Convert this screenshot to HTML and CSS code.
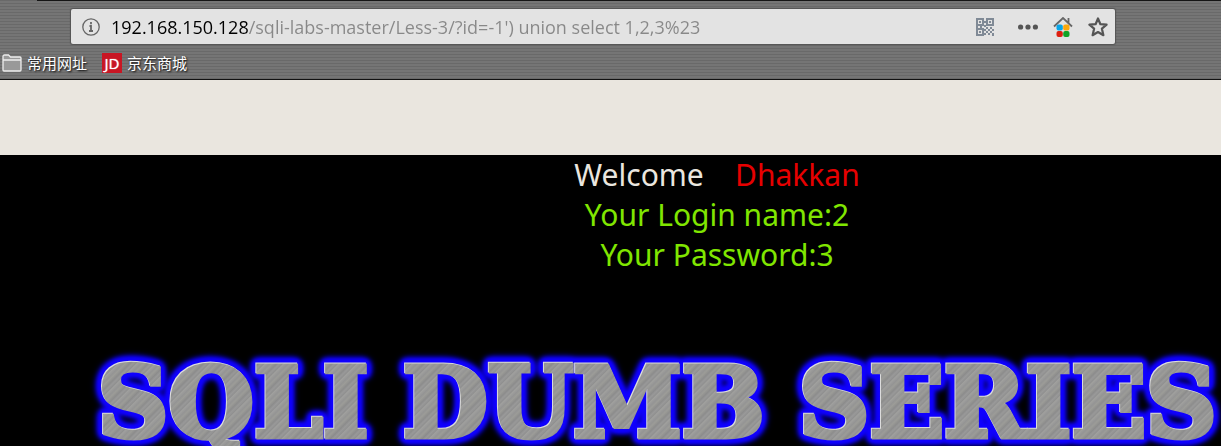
FILE: index.html
```html
<!DOCTYPE html>
<html lang="en">
<head>
    <meta charset="UTF-8">
    <meta name="viewport" content="width=device-width, initial-scale=1.0">
    <title>Less-3 Error Based - String</title>
    <link rel="stylesheet" href="styles.css">
</head>
<body>
    <header class="toolbar">
        <div class="address-bar">
            <svg class="info-icon" viewBox="0 0 18 18">
                <circle cx="9" cy="9" r="8.200" fill="none" stroke="#666" stroke-width="1.300"/>
                <path d="M9 4v2.200M7.500 8H9v5M7 13h4" fill="none" stroke="#666" stroke-width="1.800"/>
            </svg>
            <input type="text" class="address" aria-label="Address" value="192.168.150.128/sqli-labs-master/Less-3/?id=-1') union select 1,2,3%23">
            <div class="actions">
                <button class="action" aria-label="QR code">
                    <svg width="18" height="18" viewBox="0 0 18 18">
                        <g fill="none" stroke="#808a96" stroke-width="2">
                            <rect x="1" y="1" width="6" height="6"/>
                            <rect x="11" y="1" width="6" height="6"/>
                            <rect x="1" y="11" width="6" height="6"/>
                        </g>
                        <path fill="#808a96" d="M3 3h2v2H3zM13 3h2v2h-2zM3 13h2v2H3zM8 3h2v2H8zM8 7h2v2H8zM0 8h2v2H0zM4 8h2v2H4zM10 9h2v2h-2zM14 9h2v2h-2zM8 11h2v2H8zM12 11h2v2h-2zM16 11h2v2h-2zM10 13h2v2h-2zM14 13h2v2h-2zM8 15h2v2H8zM12 15h2v2h-2zM16 15h2v3h-2z"/>
                    </svg>
                </button>
                <button class="action menu" aria-label="Page actions">
                    <svg width="20" height="6" viewBox="0 0 20 6" fill="#555">
                        <circle cx="2.600" cy="3" r="2.600"/>
                        <circle cx="10" cy="3" r="2.600"/>
                        <circle cx="17.400" cy="3" r="2.600"/>
                    </svg>
                </button>
                <button class="action" aria-label="Home">
                    <svg width="20" height="20" viewBox="0 0 20 20">
                        <path d="M1 9.500L10 1l9 8.500M15.500 1v5" fill="none" stroke="#666" stroke-width="1.800"/>
                        <rect x="3.500" y="7.500" width="6.300" height="6" rx="2" fill="#08a5e8"/>
                        <rect x="10.200" y="7.500" width="6.300" height="6" rx="2" fill="#fba80c"/>
                        <rect x="3.500" y="14" width="6.300" height="6" rx="2" fill="#dd2010"/>
                        <rect x="10.200" y="14" width="6.300" height="6" rx="2" fill="#12a326"/>
                    </svg>
                </button>
                <button class="action" aria-label="Bookmark this page">
                    <svg width="20" height="20" viewBox="0 0 20 20">
                        <path d="M10 1.500l2.400 5.700 6.200.5-4.700 4 1.500 6.500L10 15l-5.400 3.200 1.500-6.500-4.700-4 6.200-.5z" fill="none" stroke="#555" stroke-width="2.200" stroke-linejoin="round"/>
                    </svg>
                </button>
            </div>
        </div>
        <nav class="bookmarks">
            <a class="bookmark" href="#">
                <svg width="20" height="18" viewBox="0 0 20 18">
                    <path d="M1 16V2.500Q1 1 2.500 1h4L8.500 3H18q1 0 1 1v12q0 1-1 1H2q-1 0-1-1zM1 6h18" fill="#999" stroke="#eee" stroke-width="1.300"/>
                </svg>
                <span>常用网址</span>
            </a>
            <a class="bookmark" href="#">
                <span class="jd">JD</span>
                <span>京东商城</span>
            </a>
        </nav>
    </header>
    <main class="page">
        <div class="welcome">
            <div>Welcome&nbsp;&nbsp;&nbsp;&nbsp;<span class="name">Dhakkan</span></div>
            <div class="result">Your Login name:2</div>
            <div class="result">Your Password:3</div>
        </div>
        <div class="banner"><h1 class="title">SQLI DUMB SERIES</h1></div>
    </main>
</body>
</html>
```
FILE: styles.css
```css
body {
    display: flex;
    flex-direction: column;
    margin: 0;
    height: 100vh;
    overflow: hidden;
    background-color: #eae6df;
    font-family: "Open Sans", "Noto Sans CJK SC", sans-serif;
}

.toolbar {
    flex: none;
    box-sizing: border-box;
    height: 80px;
    padding-top: 9px;
    border-bottom: 1px solid #111;
    background:
        linear-gradient(#151515, #151515) 37px 0 / 100% 1px no-repeat,
        repeating-linear-gradient(#696969 0, #696969 1px, #757575 1px, #757575 3px);
}

.address-bar {
    display: flex;
    align-items: center;
    box-sizing: border-box;
    height: 35px;
    margin: 0 106px 0 71px;
    padding: 0 7px 0 11px;
    border-radius: 2px;
    background-color: #e3e3e3;
    box-shadow: 0 0 1px 1px #555;
}

.info-icon {
    width: 18px;
    height: 18px;
}

.address {
    flex: 1;
    min-width: 0;
    margin-left: 11px;
    padding: 0;
    border: 0;
    outline: 0;
    font: 18px "Open Sans", sans-serif;
    color: transparent;
    background: linear-gradient(to right, #000 138px, #888 138px);
    -webkit-background-clip: text;
    background-clip: text;
}

.actions {
    display: flex;
    align-items: center;
    gap: 15px;
}

.action {
    display: flex;
    padding: 0;
    border: 0;
    background: none;
}

.menu {
    margin-left: 9px;
}

.bookmarks {
    display: flex;
    gap: 15px;
    padding: 7px 2px;
}

.bookmark {
    display: flex;
    align-items: center;
    gap: 5px;
    height: 24px;
    font-size: 15px;
    line-height: 20px;
    color: #fff;
    text-decoration: none;
    text-shadow: 1px 1px 2px #000;
}

.jd {
    width: 20px;
    height: 20px;
    font: 15px/20px "Open Sans", sans-serif;
    text-align: center;
    text-shadow: 0 0 1px #fff;
    background-color: #c81623;
}

.page {
    flex: 1;
    min-height: 0;
    margin-top: 75px;
    overflow: hidden;
    background-color: #000;
}

.welcome {
    padding-left: 213px;
    font-family: "Noto Sans", sans-serif;
    font-size: 30px;
    line-height: 40px;
    text-align: center;
    color: #eae6df;
}

.name {
    color: #e60000;
}

.result {
    color: #80e600;
}

.banner {
    padding: 68px 0 0 98px;
    filter: drop-shadow(0 0 2px #10f) drop-shadow(0 0 2px #10f) drop-shadow(0 0 2px #10f) drop-shadow(0 0 2px #10f) drop-shadow(0 0 2px #10f);
}

/* brushed metal lettering */
.title {
    margin: 0;
    font: bold 98px/120px "DejaVu Serif", serif;
    white-space: nowrap;
    color: transparent;
    -webkit-text-stroke: 5px transparent;
    background: repeating-linear-gradient(135deg, #999 0, #909090 2px, #a0a09e 3px, #949494 6px, #9c9c98 8px, #8c8c8c 11px, #999 13px);
    -webkit-background-clip: text;
    background-clip: text;
    filter: drop-shadow(-1px -1px 0 #ddd);
}
```
